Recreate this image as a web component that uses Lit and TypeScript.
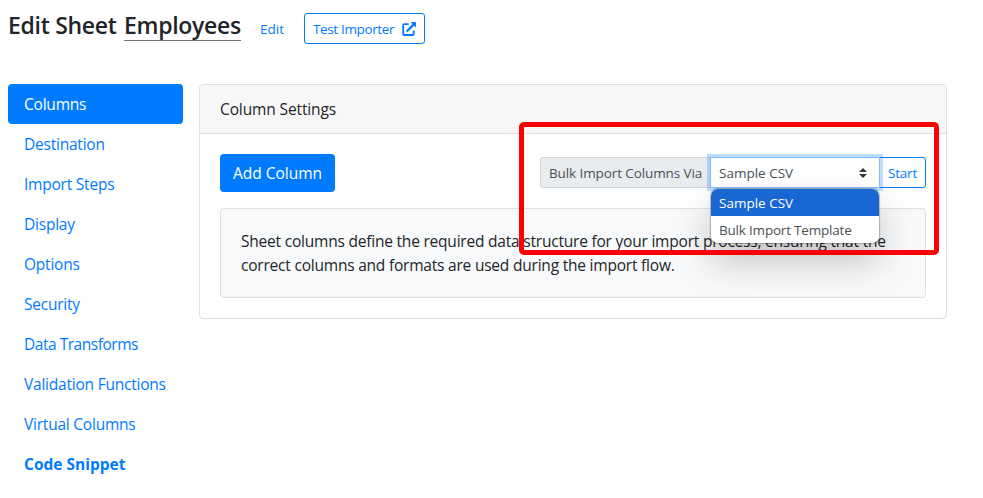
import { LitElement, html, css } from "lit";
import { customElement, property, state } from "lit/decorators.js";
import { classMap } from "lit/directives/class-map.js";

@customElement("side-nav")
class SideNav extends LitElement {
  static styles = css`
    :host { display: block; width: 175px; flex: none; }
    nav { display: flex; flex-direction: column; }
    a {
      height: 40px; line-height: 41px; padding: 0 16px; box-sizing: border-box;
      color: #007bff; text-decoration: none; border-radius: 4px;
      font-size: 15.5px; letter-spacing: -0.22px; white-space: nowrap;
    }
    a.active { background: #007bff; color: #fff; }
    a.tight { letter-spacing: -0.47px; }
    a.strong { font-weight: 700; letter-spacing: 0; }
  `;
  @property({ attribute: false }) items: string[] = [];
  @property() active = "";
  @property() strong = "";
  render() {
    return html`<nav>${this.items.map(
      (item) => html`<a class=${classMap({ active: item === this.active, strong: item === this.strong, tight: item === "Data Transforms" })}>${item}</a>`
    )}</nav>`;
  }
}

@customElement("import-select")
class ImportSelect extends LitElement {
  static styles = css`
    :host { display: block; position: relative; z-index: 3; width: 170px; margin-left: -1px; box-sizing: border-box; }
    .control {
      display: flex; align-items: center; justify-content: space-between;
      height: 31px; box-sizing: border-box; padding: 1px 12px 0 8px;
      border: 1px solid #80bdff; background: #fff; color: #495057;
      box-shadow: 0 0 0 3px rgba(0, 123, 255, 0.25);
      font-size: 13.5px;
    }
    svg { width: 8px; height: 10px; display: block; }
    .menu {
      position: absolute; left: 1px; right: 1px; top: 32px; z-index: 4;
      border-radius: 7px; overflow: hidden; background: #fff; color: #495057;
      font-size: 13.5px;
      box-shadow: 0 0 1px 1px rgba(0, 0, 0, 0.25), 0 18px 36px rgba(0, 0, 0, 0.22);
    }
    .option { height: 27px; line-height: 29px; padding-left: 8px; letter-spacing: -0.2px; white-space: nowrap; }
    .option.selected { background: #1967d2; color: #fff; letter-spacing: 0; }
  `;
  @property({ attribute: false }) options: string[] = [];
  @property() value = "";
  render() {
    return html`
      <div class="control">
        <span>${this.value}</span>
        <svg viewBox="0 0 8 10"><path d="M4 0 8 4H0zM0 6h8L4 10z" fill="#343a40" /></svg>
      </div>
      <div class="menu">
        ${this.options.map((o) => html`<div class=${classMap({ option: true, selected: o === this.value })}>${o}</div>`)}
      </div>
    `;
  }
}

@customElement("app-root")
class AppRoot extends LitElement {
  static styles = css`
    :host {
      display: block; height: 498px; box-sizing: border-box; padding: 8px 36px 0 8px; overflow: hidden;
      background: #fff; color: #212529;
      font-family: "Open Sans", "Noto Sans", sans-serif; font-size: 15.5px;
    }
    header { display: flex; height: 76px; align-items: flex-start; white-space: nowrap; }
    h1 { margin: 0; font-size: 23px; font-weight: 600; line-height: 35px; letter-spacing: -0.3px; display: flex; }
    .lead { width: 116px; }
    .name { width: 117px; height: 32px; border-bottom: 1px solid #6c757d; }
    .edit { margin: 5px 0 0 19px; color: #007bff; font-size: 13.5px; line-height: 33px; width: 24px; }
    .test {
      margin: 5px 0 0 20px; width: 121px; height: 31px; box-sizing: border-box; padding: 1px 8px 0;
      display: flex; align-items: center; justify-content: space-between;
      border: 1px solid #007bff; border-radius: 3px; color: #007bff; font-size: 13.5px; letter-spacing: -0.36px;
    }
    .test svg { width: 14px; height: 14px; }
    main { display: flex; gap: 16px; align-items: flex-start; }
    .card {
      position: relative; flex: 1; height: 235px; box-sizing: border-box;
      border: 1px solid #dfdfdf; border-radius: 4px;
    }
    .head {
      height: 49px; line-height: 48px; box-sizing: border-box; padding: 0 20px;
      background: #f7f7f7; border-bottom: 1px solid #dfdfdf; border-radius: 3px 3px 0 0; letter-spacing: -0.12px;
    }
    .body { padding: 20px; }
    .tools { display: flex; align-items: flex-start; justify-content: space-between; }
    .add {
      width: 115px; height: 38px; line-height: 39px; text-align: center; border-radius: 4px;
      background: #007bff; color: #fff; white-space: nowrap;
    }
    .group { display: flex; height: 31px; margin-top: 3px; font-size: 13.5px; white-space: nowrap; }
    .label {
      width: 171px; box-sizing: border-box; border: 1px solid #ced4da; border-radius: 3px 0 0 3px;
      background: #e9ecef; color: #495057; padding-left: 8px; line-height: 31px; letter-spacing: -0.1px;
    }
    .start {
      width: 47px; box-sizing: border-box; margin-left: -1px; border: 1px solid #007bff;
      border-radius: 0 3px 3px 0; color: #007bff; padding-left: 8px; line-height: 31px; letter-spacing: -0.2px;
    }
    .info {
      margin-top: 16px; height: 90px; box-sizing: border-box; padding: 20px 20px 0;
      border: 1px solid #dfdfdf; border-radius: 4px; background: #f8f9fa;
      line-height: 24px; letter-spacing: -0.21px; white-space: nowrap;
    }
    .marker {
      position: absolute; left: 319px; top: 37px; width: 420px; height: 133px; box-sizing: border-box;
      border: 5px solid #f00; border-radius: 5px; z-index: 10; pointer-events: none;
    }
  `;
  @state() private method = "Sample CSV";
  render() {
    return html`
      <header>
        <h1><span class="lead">Edit Sheet</span><span class="name">Employees</span></h1>
        <a class="edit">Edit</a>
        <a class="test">
          <span>Test Importer</span>
          <svg viewBox="0 0 14 14" fill="none" stroke="#007bff">
            <path d="M6.7 2.2H2.2Q1.2 2.2 1.2 3.2V12Q1.2 13 2.2 13H10.7Q11.7 13 11.7 12V8.4" stroke-width="1.8" />
            <path d="M4.7 9.5 11.8 2.4" stroke-width="2.2" />
            <path d="M8.6 0H13.4Q14 0 14 .6V5.4L12.2 3.7 10.3 1.8Z" fill="#007bff" stroke="none" />
          </svg>
        </a>
      </header>
      <main>
        <side-nav
          .items=${["Columns", "Destination", "Import Steps", "Display", "Options", "Security", "Data Transforms", "Validation Functions", "Virtual Columns", "Code Snippet"]}
          active="Columns"
          strong="Code Snippet"
        ></side-nav>
        <section class="card">
          <div class="head">Column Settings</div>
          <div class="body">
            <div class="tools">
              <div class="add">Add Column</div>
              <div class="group">
                <div class="label">Bulk Import Columns Via</div>
                <import-select .options=${["Sample CSV", "Bulk Import Template"]} .value=${this.method}></import-select>
                <div class="start">Start</div>
              </div>
            </div>
            <div class="info">
              Sheet columns define the required data structure for your import process, ensuring that the<br />
              correct columns and formats are used during the import flow.
            </div>
          </div>
          <div class="marker"></div>
        </section>
      </main>
    `;
  }
}
